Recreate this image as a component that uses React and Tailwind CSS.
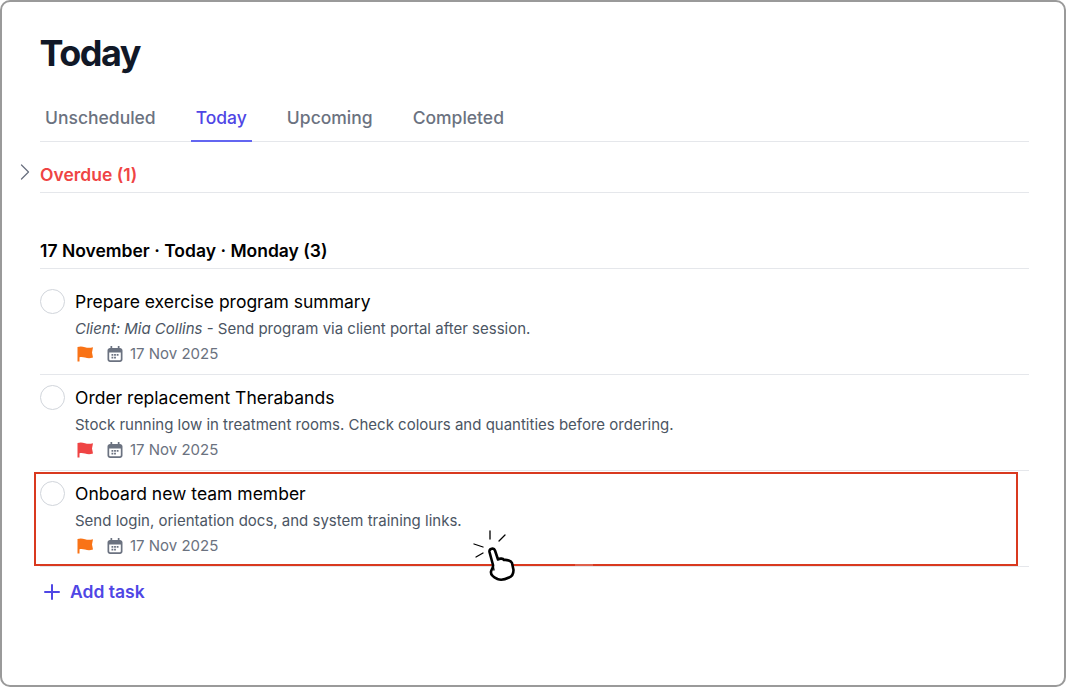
import React from "react";
import { ChevronRight, Plus } from "lucide-react";

const tabs = ["Unscheduled", "Today", "Upcoming", "Completed"];

const tasks = [
  {
    title: "Prepare exercise program summary",
    client: "Client: Mia Collins",
    note: " - Send program via client portal after session.",
    flag: "text-[#f97316]",
  },
  {
    title: "Order replacement Therabands",
    note: "Stock running low in treatment rooms. Check colours and quantities before ordering.",
    flag: "text-[#ef4444]",
  },
  {
    title: "Onboard new team member",
    note: "Send login, orientation docs, and system training links.",
    flag: "text-[#f97316]",
  },
];

function Flag({ className }) {
  return (
    <svg viewBox="0 0 16 16" className={`h-[16px] w-[16px] ${className}`} fill="currentColor">
      <path d="M0.500 1C3 0 5.500 0.300 8 1.200C10.500 2 13 2 16 1.200L15 6.500L16 11.500C13 12.500 10.500 12.300 8 11.500C6 10.900 4 10.800 2.500 11.200V15.500H0.500Z" />
    </svg>
  );
}

function Calendar() {
  return (
    <svg viewBox="0 0 16 16" className="h-[16px] w-[16px] text-[#6b7280]" fill="currentColor">
      <path
        fillRule="evenodd"
        d="M3.500 0H5.200V2H10.800V0H12.500V2H13C14.300 2 15.500 3 15.500 4.500V13.500C15.500 15 14.300 16 13 16H3C1.700 16 0.500 15 0.500 13.500V4.500C0.500 3 1.700 2 3 2H3.500ZM2.200 6.500V13C2.200 13.800 2.700 14.300 3.500 14.300H12.500C13.300 14.300 13.800 13.800 13.800 13V6.500Z"
      />
      <path d="M4.500 8H6.300V9.700H4.500ZM7.100 8H8.900V9.700H7.100ZM9.700 8H11.500V9.700H9.700ZM4.500 10.800H6.300V12.500H4.500ZM7.100 10.800H8.900V12.500H7.100Z" />
    </svg>
  );
}

function Pointer() {
  return (
    <svg viewBox="0 0 44 52" className="absolute left-[473px] top-[530px] h-[52px] w-[44px]" fill="none" stroke="#000" strokeLinecap="round" strokeLinejoin="round">
      <path strokeWidth="1.300" d="M17 1V9M32 5L26 11M1 14L10 17M3 27L10 23" />
      <path
        fill="#fff"
        strokeWidth="2.600"
        d="M16.500 22C16 18.500 21 17.500 22 20.500L25 29.500C27 28 30 28.500 31 30C34 29.500 38 31 39 33L40.500 40C40.500 44 39 46.500 36 47.500C32 49.500 27 50 24.500 49C21 47.500 17.500 45.500 18 42C18 39.500 20.500 38 20 35Z"
      />
      <path strokeWidth="1.300" d="M20 35L21 40" />
    </svg>
  );
}

function TaskRow({ task }) {
  return (
    <div className="flex h-[96px] gap-[10px] border-b border-[#e5e7eb] pt-[10px]">
      <div className="h-[25px] w-[25px] shrink-0 rounded-full border border-[#d1d5db] bg-white"></div>
      <div className="min-w-0 flex-1">
        <div className="text-[17.500px] leading-[25px] text-black">{task.title}</div>
        <div className="mt-[4px] text-[15px] leading-[22px] text-[#4b5563]">
          {task.client && <em>{task.client}</em>}
          {task.note}
        </div>
        <div className="mt-[2px] flex h-[24px] items-center">
          <Flag className={`${task.flag} ml-[2px]`} />
          <div className="ml-[14px]"><Calendar /></div>
          <span className="ml-[7px] text-[15px] text-[#6b7280]">17 Nov 2025</span>
        </div>
      </div>
    </div>
  );
}

export default function App() {
  return (
    <div className="relative h-[687px] w-[1066px] overflow-hidden rounded-[10px] border-2 border-[#9a9a9a] bg-white font-['Inter',sans-serif]">
      <div className="ml-[38px] mr-[35px] pt-[28px]">
        <h1 className="-ml-[0.500px] text-[36px] font-bold leading-[46px] tracking-[-1.500px] text-[#111827]">Today</h1>

        <div className="mt-[19px] flex h-[47px] gap-[30px] border-b border-[#e5e7eb] pt-[2px]">
          {tabs.map((t) => (
            <div
              key={t}
              className={`-mb-px flex items-center border-b-2 px-[5px] text-[17.500px] font-medium ${
                t === "Today" ? "border-[#6366f1] text-[#4f46e5]" : "border-transparent text-[#6b7280]"
              }`}
            >
              {t}
            </div>
          ))}
        </div>

        <div className="relative flex h-[51px] items-center border-b border-[#e5e7eb] pt-[16px]">
          <ChevronRight className="absolute -left-[29px] top-[16px] h-[28px] w-[28px] text-[#6b7280]" strokeWidth={1.100} />
          <span className="text-[17.500px] font-semibold text-[#ef4444]">Overdue (1)</span>
        </div>

        <div className="mt-[40px] flex h-[36px] items-center border-b border-[#e5e7eb] pt-[1px] text-[17.500px] font-semibold text-black">
          17 November · Today · Monday (3)
        </div>

        <div className="mt-[10px]">
          {tasks.map((task) => (
            <TaskRow key={task.title} task={task} />
          ))}
        </div>

        <div className="mt-[12px] flex items-center gap-[6px] text-[#4f46e5]">
          <Plus className="h-[24px] w-[24px]" strokeWidth={2} />
          <span className="text-[17.500px] font-semibold">Add task</span>
        </div>
      </div>

      {/* annotation over the last row */}
      <div className="absolute left-[32px] top-[470px] h-[94px] w-[984px] border-2 border-[#d9391f]"></div>
      <div className="absolute left-[573px] top-[562px] h-[2px] w-[18px] bg-white/20"></div>
      <div className="absolute left-0 top-0 -translate-x-[2px] -translate-y-[2px]">
        <Pointer />
      </div>
    </div>
  );
}
